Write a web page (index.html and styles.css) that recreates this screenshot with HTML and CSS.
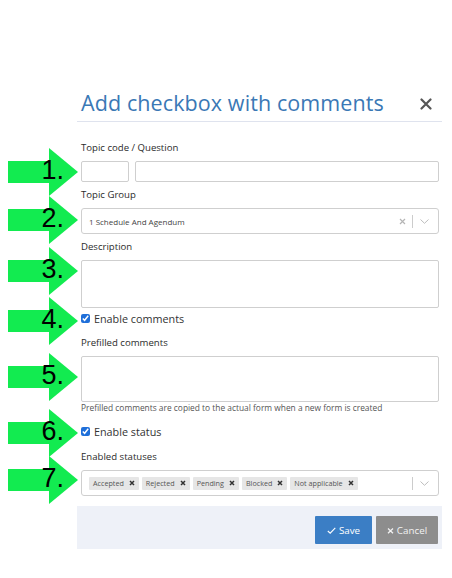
FILE: index.html
```html
<!DOCTYPE html>
<html lang="en">
<head>
<meta charset="utf-8">
<title>Add checkbox with comments</title>
<link rel="stylesheet" href="styles.css">
</head>
<body>
<div class="dialog">
  <header class="dlg-head">
    <h1 class="title">Add checkbox with comments</h1>
    <span class="close" aria-label="Close">
      <svg width="12" height="12" viewBox="0 0 12 12"><path d="M1.5 1.5 L10.5 10.5 M10.5 1.5 L1.5 10.5" stroke="#555" stroke-width="2.2" stroke-linecap="round"/></svg>
    </span>
  </header>

  <div class="dlg-body">
    <div class="field">
      <div class="arrow arrow-1"><span class="shaft"></span><span class="head"></span><span class="num">1.</span></div>
      <div class="label">Topic code / Question</div>
      <div class="row-inputs">
        <div class="input input-code"></div>
        <div class="input input-question"></div>
      </div>
    </div>

    <div class="field">
      <div class="arrow arrow-2"><span class="shaft"></span><span class="head"></span><span class="num">2.</span></div>
      <div class="label">Topic Group</div>
      <div class="select">
        <span class="select-value">1 Schedule And Agendum</span>
        <span class="select-clear"><svg width="7" height="7" viewBox="0 0 7 7"><path d="M1 1 L6 6 M6 1 L1 6" stroke="#b5b5b5" stroke-width="1.2"/></svg></span>
        <span class="select-sep"></span>
        <span class="select-chev"><svg width="9" height="5" viewBox="0 0 9 5"><path d="M0.5 0.5 L4.5 4.3 L8.5 0.5" fill="none" stroke="#bdbdbd" stroke-width="1"/></svg></span>
      </div>
    </div>

    <div class="field field-tight">
      <div class="arrow arrow-3"><span class="shaft"></span><span class="head"></span><span class="num">3.</span></div>
      <div class="label">Description</div>
      <div class="input textarea textarea-desc"></div>
    </div>

    <label class="check check-comments">
      <span class="arrow arrow-4"><span class="shaft"></span><span class="head"></span><span class="num">4.</span></span>
      <input type="checkbox" checked>
      <span>Enable comments</span>
    </label>

    <div class="field field-help">
      <div class="arrow arrow-5"><span class="shaft"></span><span class="head"></span><span class="num">5.</span></div>
      <div class="label">Prefilled comments</div>
      <div class="input textarea textarea-pref"></div>
      <div class="help">Prefilled comments are copied to the actual form when a new form is created</div>
    </div>

    <label class="check check-status">
      <span class="arrow arrow-6"><span class="shaft"></span><span class="head"></span><span class="num">6.</span></span>
      <input type="checkbox" checked>
      <span>Enable status</span>
    </label>

    <div class="field field-last">
      <div class="arrow arrow-7"><span class="shaft"></span><span class="head"></span><span class="num">7.</span></div>
      <div class="label">Enabled statuses</div>
      <div class="select multi">
        <div class="tags">
          <span class="tag">Accepted <svg class="tag-x" width="6" height="6" viewBox="0 0 6 6"><path d="M1 1 L5 5 M5 1 L1 5" stroke="#333" stroke-width="1.5"/></svg></span>
          <span class="tag">Rejected <svg class="tag-x" width="6" height="6" viewBox="0 0 6 6"><path d="M1 1 L5 5 M5 1 L1 5" stroke="#333" stroke-width="1.5"/></svg></span>
          <span class="tag">Pending <svg class="tag-x" width="6" height="6" viewBox="0 0 6 6"><path d="M1 1 L5 5 M5 1 L1 5" stroke="#333" stroke-width="1.5"/></svg></span>
          <span class="tag">Blocked <svg class="tag-x" width="6" height="6" viewBox="0 0 6 6"><path d="M1 1 L5 5 M5 1 L1 5" stroke="#333" stroke-width="1.5"/></svg></span>
          <span class="tag">Not applicable <svg class="tag-x" width="6" height="6" viewBox="0 0 6 6"><path d="M1 1 L5 5 M5 1 L1 5" stroke="#333" stroke-width="1.5"/></svg></span>
        </div>
        <span class="select-sep"></span>
        <span class="select-chev"><svg width="9" height="5" viewBox="0 0 9 5"><path d="M0.5 0.5 L4.5 4.3 L8.5 0.5" fill="none" stroke="#bdbdbd" stroke-width="1"/></svg></span>
      </div>
    </div>
  </div>

  <footer class="dlg-foot">
    <button class="btn btn-save" type="button">
      <svg width="9" height="7" viewBox="0 0 9 7"><path d="M0.8 4 L3.2 6.2 L8.3 0.8" fill="none" stroke="#fff" stroke-width="1.1"/></svg>
      Save
    </button>
    <button class="btn btn-cancel" type="button">
      <svg width="7" height="7" viewBox="0 0 7 7"><path d="M1 1.5 L6 6.2 M6 1.5 L1 6.2" stroke="#f2f2f2" stroke-width="1.3"/></svg>
      Cancel
    </button>
  </footer>
</div>
</body>
</html>
```

FILE: styles.css
```css
* { box-sizing: border-box; }

html, body {
  margin: 0;
  padding: 0;
  background: #ffffff;
}

body {
  font-family: "Open Sans", "Noto Sans", sans-serif;
  color: #333;
  width: 452px;
  height: 578px;
  overflow: hidden;
}

.dialog {
  margin: 88px 0 0 77px;
  width: 365px;
}

.dlg-head {
  display: flex;
  align-items: center;
  justify-content: space-between;
  padding: 0 10px 3px 4px;
  border-bottom: 1px solid #dfe3ee;
}

.title {
  margin: 0;
  font-size: 21.5px;
  line-height: 30px;
  font-weight: 400;
  color: #3a78b5;
  letter-spacing: 0.1px;
}

.close {
  display: flex;
  width: 12px;
  height: 12px;
  margin-top: 2px;
}

.dlg-body {
  padding: 19px 3px 10px 4px;
}

.field {
  position: relative;
  margin-bottom: 6px;
}

.field-tight { margin-bottom: 3px; }
.field-help { margin-bottom: 11px; }
.field-last { margin-bottom: 0; }

.label {
  font-size: 9.6px;
  line-height: 14px;
  color: #2b2b2b;
  margin-bottom: 6px;
}

.row-inputs {
  display: flex;
  gap: 6px;
}

.input {
  height: 21px;
  border: 1px solid #cfcfcf;
  border-radius: 2px;
  background: #fff;
}

.input-code { width: 48px; }
.input-question { flex: 1; }

.textarea-desc { height: 48px; }
.textarea-pref { height: 46px; }

.help {
  font-size: 8.4px;
  line-height: 11px;
  color: #555;
}

.select {
  height: 26px;
  border: 1px solid #cfcfcf;
  border-radius: 3px;
  display: flex;
  align-items: center;
  padding: 0 9px 0 7px;
}

.select-value {
  flex: 1;
  font-size: 8px;
  color: #444;
}

.select-clear {
  display: flex;
  margin-right: 6px;
}

.select-sep {
  width: 1px;
  height: 13px;
  background: #cccccc;
  margin-right: 7px;
}

.select-chev { display: flex; }

.tags {
  flex: 1;
  display: flex;
  gap: 3px;
}

.tag {
  display: flex;
  align-items: center;
  gap: 5px;
  height: 13px;
  padding: 0 4px;
  background: #e6e6e6;
  border-radius: 1px;
  font-size: 7.2px;
  color: #555;
}

.check {
  position: relative;
  display: flex;
  align-items: center;
  gap: 4px;
  font-size: 10.8px;
  line-height: 15px;
  color: #333;
}

.check input {
  margin: 0;
  width: 9px;
  height: 9px;
  accent-color: #1f6fd9;
}

.check-comments { margin-bottom: 10px; }
.check-status { margin-bottom: 11px; }

/* annotation arrows */
.arrow {
  position: absolute;
  left: -73px;
  width: 70px;
  height: 48px;
  display: flex;
  align-items: center;
}

.shaft {
  width: 41px;
  height: 22px;
  background: #12eb50;
}

.head {
  width: 0;
  height: 0;
  border-left: 29px solid #12eb50;
  border-top: 24px solid transparent;
  border-bottom: 24px solid transparent;
}

.num {
  position: absolute;
  right: 14px;
  top: -2px;
  font-family: "Liberation Sans", Arial, sans-serif;
  font-size: 27px;
  line-height: 48px;
  color: #000;
}

.arrow-1 { top: 7px; }
.arrow-2 { top: 8px; }
.arrow-3 { top: 7px; }
.arrow-4 { top: -14px; }
.arrow-5 { top: 17px; }
.arrow-6 { top: -15px; }
.arrow-7 { top: 6px; }

.dlg-foot {
  background: #eef1f8;
  display: flex;
  justify-content: flex-end;
  gap: 4px;
  padding: 10px 4px 5px 0;
}

.btn {
  height: 28px;
  border: 0;
  border-radius: 1px;
  font-family: "Open Sans", "Noto Sans", sans-serif;
  font-size: 9.8px;
  color: #fff;
  display: flex;
  align-items: center;
  justify-content: center;
  gap: 3px;
  padding: 0;
}

.btn-save {
  width: 57px;
  background: #3b7ec5;
}

.btn-cancel {
  width: 62px;
  background: #8d8d8d;
  color: #f2f2f2;
}
```
